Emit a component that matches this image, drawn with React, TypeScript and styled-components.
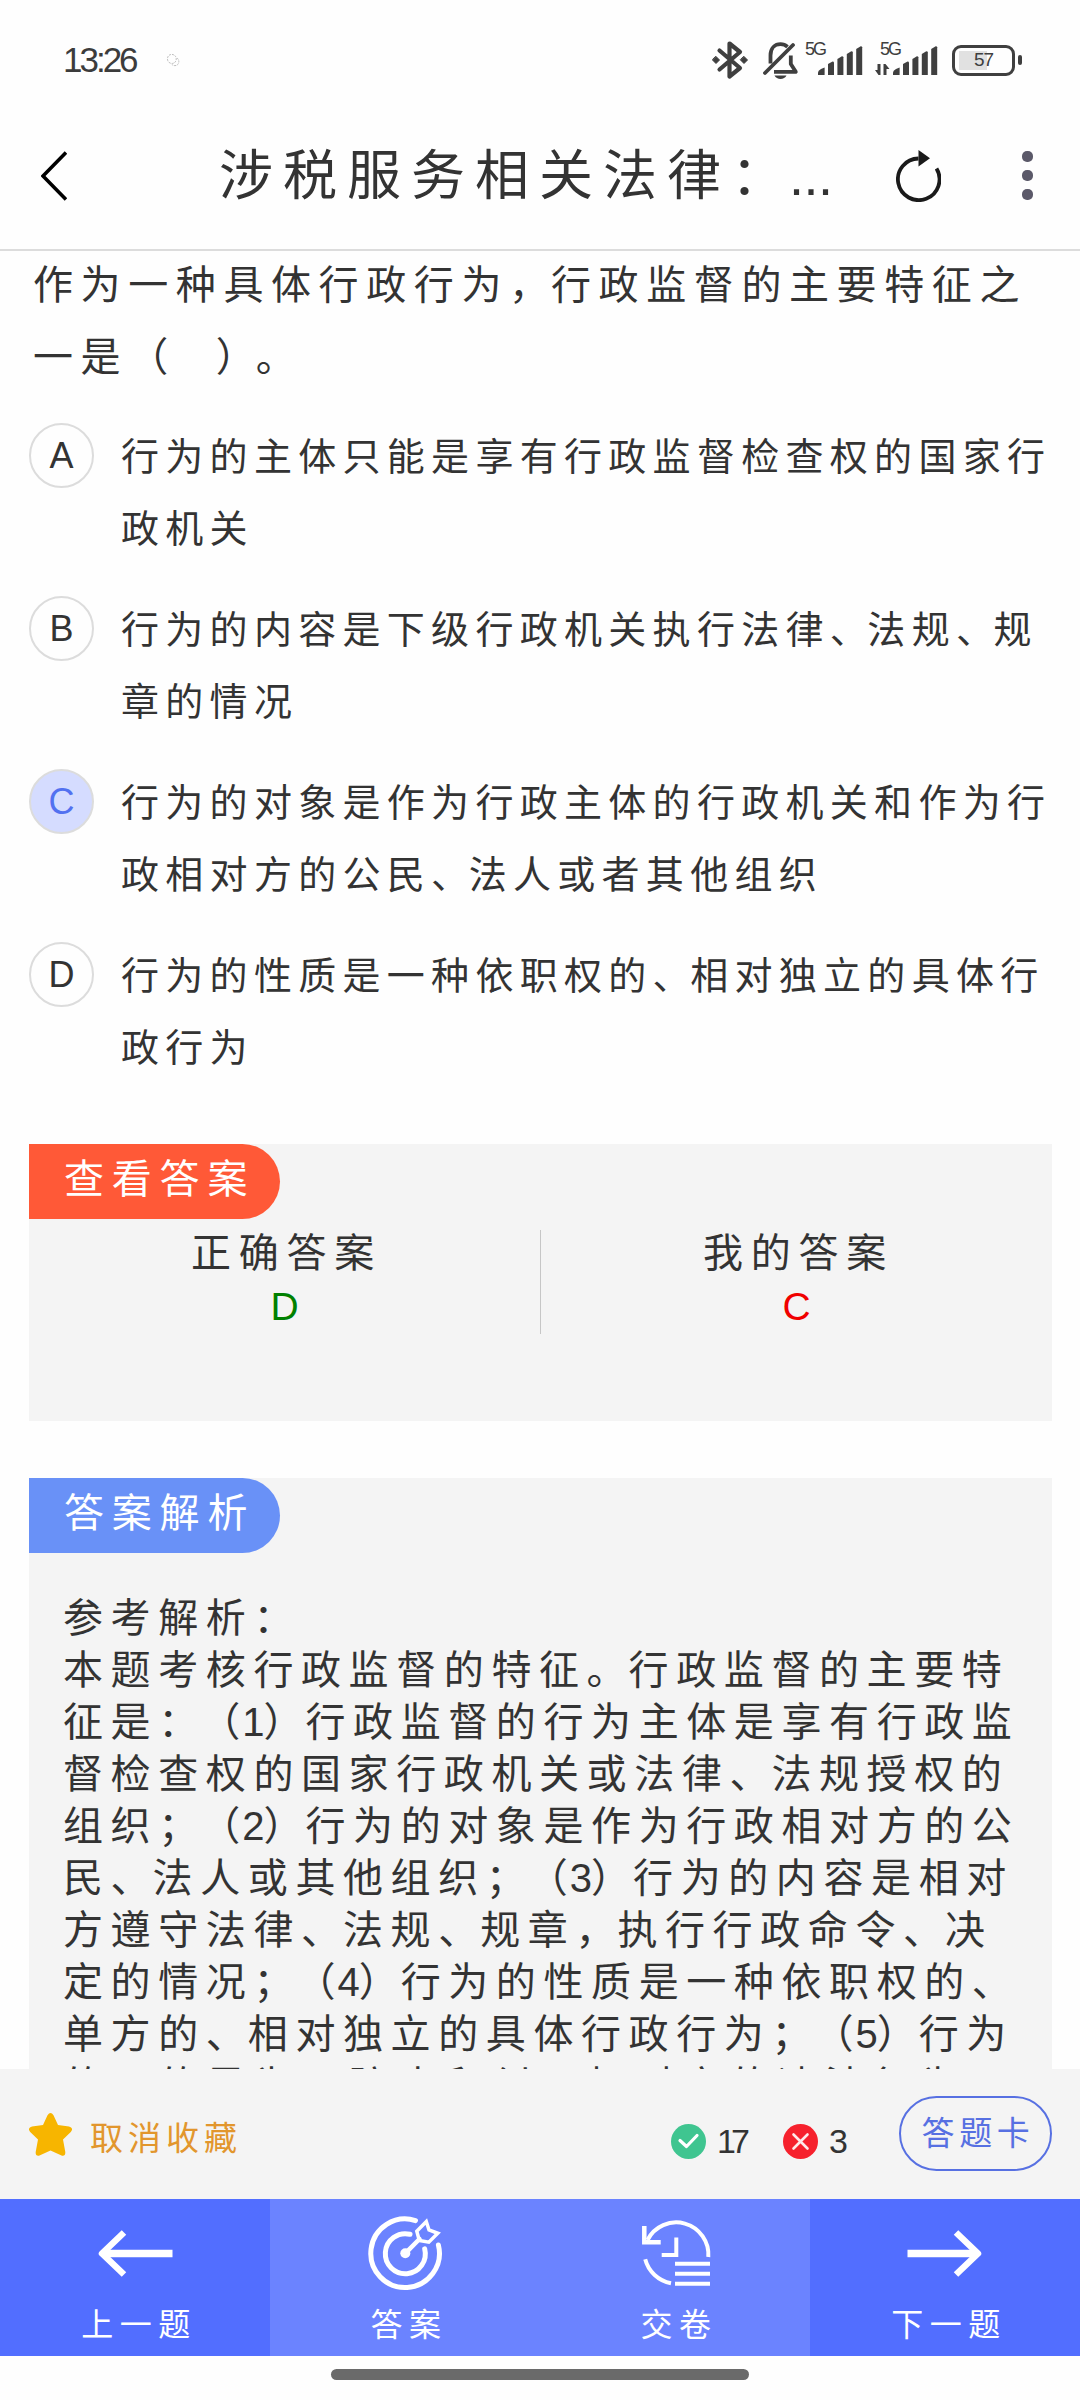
import React from 'react';
import styled, { createGlobalStyle } from 'styled-components';

const GlobalStyle = createGlobalStyle`
  * { box-sizing: border-box; }
  html, body { margin: 0; padding: 0; background: #fefefe; }
  body {
    font-family: "Liberation Sans", "Noto Sans CJK SC", sans-serif;
    color: #333;
    text-spacing-trim: space-all;
    font-kerning: none;
  }
`;

const Screen = styled.div`
  width: 1080px;
  height: 2400px;
  display: flex;
  flex-direction: column;
  background: #fefefe;
  overflow: hidden;
`;

/* ---------- status bar ---------- */
const StatusBar = styled.div`
  height: 102px;
  padding: 18px 58px 0 63px;
  display: flex;
  align-items: center;
  flex: none;
`;

const Clock = styled.span`
  font-size: 35px;
  line-height: 44px;
  letter-spacing: -3px;
  color: #3c3c3c;
  width: 103px;
  white-space: nowrap;
`;

const StatusIcons = styled.div`
  display: flex;
  align-items: center;
  margin-left: auto;
  color: #3f3f3f;
`;

const SignalBox = styled.div<{ $left: number; $width: number }>`
  position: relative;
  width: ${(p) => p.$width}px;
  height: 40px;
  margin-left: ${(p) => p.$left}px;
  svg { display: block; }
`;

const Generation = styled.span<{ $x: number }>`
  position: absolute;
  left: ${(p) => p.$x}px;
  top: 0;
  font-size: 18px;
  line-height: 18px;
  letter-spacing: -2px;
`;

const Battery = styled.div`
  display: flex;
  align-items: center;
  margin-left: 14px;
`;

const BatteryShell = styled.div`
  width: 63px;
  height: 31px;
  border: 3px solid #3f3f3f;
  border-radius: 9px;
  padding: 3px 4px;
  display: flex;
  justify-content: center;
  align-items: center;
  background: linear-gradient(#e1e1e1, #e1e1e1) 4px center / 28px 19px no-repeat;
  font-size: 19px;
  line-height: 20px;
  letter-spacing: -1px;
`;

const BatteryNub = styled.div`
  width: 4px;
  height: 10px;
  border-radius: 2px;
  margin-left: 3px;
  background: #3f3f3f;
`;

/* ---------- header ---------- */
const Header = styled.header`
  height: 149px;
  padding: 0 47px 0 41px;
  border-bottom: 2px solid #dcdcdc;
  display: flex;
  align-items: center;
  flex: none;
  svg { display: block; flex: none; }
`;

const Title = styled.h1`
  margin: 0 0 0 152px;
  width: 677px;
  font-size: 54px;
  font-weight: 400;
  line-height: 72px;
  letter-spacing: 10px;
  white-space: nowrap;
`;

const Tight = styled.span<{ $track: number }>`
  letter-spacing: ${(p) => p.$track}px;
`;

const MenuDots = styled.div`
  display: flex;
  flex-direction: column;
  gap: 8px;
  margin-left: 81px;
`;

const MenuDot = styled.i`
  width: 11px;
  height: 11px;
  border-radius: 5px;
  background: #5b5969;
`;

/* ---------- question ---------- */
const Content = styled.main`
  flex: 1;
  min-height: 0;
  overflow: hidden;
  padding: 0 28px 0 29px;
`;

const Question = styled.div`
  margin: -2px 0 28px 4px;
  font-size: 40px;
  line-height: 72px;
  letter-spacing: 7.6px;
  white-space: nowrap;
`;

const Row = styled.div``;

const Options = styled.div`
  display: flex;
  flex-direction: column;
  gap: 29px;
`;

const Option = styled.div`
  display: flex;
  gap: 27px;
  font-size: 38px;
  line-height: 72px;
  letter-spacing: 6.3px;
  white-space: nowrap;
`;

const Letter = styled.div<{ $picked?: boolean }>`
  width: 65px;
  height: 65px;
  margin-top: 2px;
  flex: none;
  display: flex;
  align-items: center;
  justify-content: center;
  border: 2px solid #dcdcdc;
  border-radius: 50%;
  background: ${(p) => (p.$picked ? '#d5dcff' : 'transparent')};
  color: ${(p) => (p.$picked ? '#5271f0' : '#333')};
  font-size: 36px;
  line-height: 60px;
  letter-spacing: 0;
`;

/* ---------- answer panels ---------- */
const Panel = styled.section<{ $top: number; $height: number }>`
  margin-top: ${(p) => p.$top}px;
  height: ${(p) => p.$height}px;
  background: #f4f4f4;
`;

const Tag = styled.div<{ $color: string }>`
  width: 251px;
  height: 75px;
  padding-left: 35px;
  border-radius: 0 38px 38px 0;
  background: ${(p) => p.$color};
  color: #fff;
  font-size: 40px;
  line-height: 70px;
  letter-spacing: 7.8px;
  white-space: nowrap;
`;

const Compare = styled.div`
  display: flex;
  height: 104px;
  margin-top: 11px;
`;

const Side = styled.div`
  flex: 1;
  display: flex;
  flex-direction: column;
  align-items: center;
  padding-left: 4px;
  font-size: 40px;
  line-height: 47px;
  letter-spacing: 7.8px;
  & + & { border-left: 1px solid #c6c6c6; }
`;

const Choice = styled.span<{ $color: string }>`
  color: ${(p) => p.$color};
  font-size: 39px;
  line-height: 60px;
  letter-spacing: 0;
  margin-right: 4px;
`;

const Analysis = styled.div`
  margin: 39px 0 0 34px;
  font-size: 40px;
  line-height: 52px;
  letter-spacing: 7.6px;
  white-space: nowrap;
`;

/* ---------- footer ---------- */
const Footer = styled.div`
  height: 130px;
  flex: none;
  display: flex;
  padding: 0 28px 0 29px;
  background: #f4f4f4;
  white-space: nowrap;
  svg { display: block; flex: none; }
`;

const Favourite = styled.div`
  display: flex;
  height: 130px;
  padding-top: 44px;
  gap: 18px;
  width: 642px;
  color: #e2962d;
  font-size: 33px;
  line-height: 52px;
  letter-spacing: 5px;
`;

const Tally = styled.div<{ $width: number }>`
  display: flex;
  width: ${(p) => p.$width}px;
  padding-top: 55px;
  gap: 11px;
  font-size: 34px;
  line-height: 34px;
  letter-spacing: -5px;
`;

const CardButton = styled.button`
  margin: 27px 0 0;
  padding: 0 0 0 5px;
  width: 153px;
  height: 75px;
  flex: none;
  border: 2px solid #5770e2;
  border-radius: 38px;
  background: none;
  color: #5770e2;
  font: 400 33px/68px "Liberation Sans", "Noto Sans CJK SC", sans-serif;
  letter-spacing: 4.7px;
`;

const Nav = styled.nav`
  height: 157px;
  flex: none;
  display: grid;
  grid-template-columns: repeat(4, 270px);
`;

const NavItem = styled.div<{ $strong?: boolean }>`
  background: ${(p) => (p.$strong ? '#526eff' : '#6b83ff')};
  color: #fff;
  display: flex;
  flex-direction: column;
  align-items: center;
  padding-top: 14px;
  font-size: 32px;
  line-height: 48px;
  letter-spacing: 6.5px;
  svg { display: block; }
`;

const NavLabel = styled.span`
  margin-top: 8px;
  padding-left: 8px;
`;

const Gesture = styled.div`
  height: 44px;
  flex: none;
  display: flex;
  justify-content: center;
  padding-top: 13px;
`;

const GestureBar = styled.div`
  width: 418px;
  height: 11px;
  border-radius: 6px;
  background: #6a6a6a;
`;

/* Punctuation and digits sit closer than ideographs. */
const fit = (text: string, punct: number, digit: number) =>
  text
    .split(/([，。、；：（）]+|\d+)/)
    .filter(Boolean)
    .map((part, i) => {
      if (/^\d/.test(part)) return <Tight key={i} $track={digit}>{part}</Tight>;
      if (/^[，。、；：（）]/.test(part)) return <Tight key={i} $track={punct}>{part}</Tight>;
      return part;
    });

const Bars = ({ x }: { x: number }) => (
  <g fill="currentColor">
    <path d={`M${x} 35v-2.5q0-2 3-3.5l3.600-1.500v7.500z`} />
    <path d={`M${x + 10} 35v-11l4.500-2.500q1.500 0 1.500 1v12.500z`} />
    <path d={`M${x + 19.4} 35v-16l4.500-2.800q1.500 0 1.500 1v17.800z`} />
    <path d={`M${x + 28.8} 35v-21l4.500-2.800q1.500 0 1.500 1v22.800z`} />
    <path d={`M${x + 38.2} 35v-26l4.500-2.800q1.500 0 1.500 1v27.800z`} />
  </g>
);

const BluetoothIcon = () => (
  <svg width="36" height="40" viewBox="0 0 36 40" fill="none" stroke="currentColor" strokeWidth="4.200" strokeLinejoin="round" strokeLinecap="round">
    <path d="M7.500 10.500 28 28 17.500 36.500V3.500L28 12 7.500 29.500" />
    <path d="M4 16.500 7.500 20 4 23.500 .5 20zM32 16.500l3.500 3.500-3.500 3.500-3.500-3.500z" fill="currentColor" strokeWidth="1" />
  </svg>
);

const MutedBellIcon = () => (
  <svg width="36" height="40" viewBox="0 0 36 40" fill="none" stroke="currentColor" strokeWidth="3.800" strokeLinecap="round">
    <path d="M2 33 30 5" />
    <path d="M7.500 23.500V15.500C7.500 8 12 4.200 17.500 4.200c3 0 5.200 1 7 2.600" strokeLinecap="butt" />
    <path d="M27.800 15.500V24l5 7.800H11" strokeLinejoin="round" strokeLinecap="butt" />
    <path d="M11.500 35.500h12c-2 4.500-10 4.500-12 0z" fill="currentColor" stroke="none" />
  </svg>
);

const TargetIcon = () => (
  <svg width="80" height="80" viewBox="0 0 80 80" fill="none" stroke="#fff" strokeWidth="5" strokeLinecap="round" strokeLinejoin="round">
    <path d="M50.500 7.600A34.300 34.300 0 1 0 73.400 32" />
    <path d="M45 21.300A20 20 0 1 0 59.700 35.800" />
    <circle cx="40.300" cy="40.300" r="5" fill="#fff" stroke="none" />
    <path d="M40.300 40.300 54.500 26" strokeWidth="4.500" />
    <path d="M51.800 18.300 61.300 8.500 64 17 72.800 20.300 63.800 29.200 54.300 27.500z" strokeWidth="3.500" strokeLinejoin="miter" />
  </svg>
);

const HistoryIcon = () => (
  <svg width="80" height="80" viewBox="0 0 80 80" fill="none" stroke="#fff" strokeWidth="4">
    <path d="M12.500 27A32.200 32.200 0 0 1 73.300 44" />
    <path d="M9.300 13v16.300H25.700" strokeWidth="4.500" />
    <path d="M10.200 46.300A33 33 0 0 0 36 70.300" />
    <path d="M41.300 24.500V42H26.700" />
    <path d="M40 50.700H75M40 60.700H75M40 70.700H75" />
  </svg>
);

const ArrowIcon = ({ flip }: { flip?: boolean }) => (
  <svg width="80" height="80" viewBox="0 0 80 80" fill="none" stroke="#fff">
    <g transform={flip ? 'matrix(-1 0 0 1 80 0)' : undefined}>
      <path d="M8 40.500H77.500" strokeWidth="7.500" />
      <path d="M29 19.500 7 40.500 29 61.500" strokeWidth="6.500" strokeLinejoin="round" />
    </g>
  </svg>
);

const options = [
  { letter: 'A', lines: ['行为的主体只能是享有行政监督检查权的国家行', '政机关'] },
  { letter: 'B', lines: ['行为的内容是下级行政机关执行法律、法规、规', '章的情况'] },
  { letter: 'C', lines: ['行为的对象是作为行政主体的行政机关和作为行', '政相对方的公民、法人或者其他组织'], picked: true },
  { letter: 'D', lines: ['行为的性质是一种依职权的、相对独立的具体行', '政行为'] },
];

const analysis = [
  '参考解析：',
  '本题考核行政监督的特征。行政监督的主要特',
  '征是：（1）行政监督的行为主体是享有行政监',
  '督检查权的国家行政机关或法律、法规授权的',
  '组织；（2）行为的对象是作为行政相对方的公',
  '民、法人或其他组织；（3）行为的内容是相对',
  '方遵守法律、法规、规章，执行行政命令、决',
  '定的情况；（4）行为的性质是一种依职权的、',
  '单方的、相对独立的具体行政行为；（5）行为',
  '的目的是为了防止和纠正相对方的违法行为。',
];

export default function App() {
  return (
    <Screen>
      <GlobalStyle />
      <StatusBar>
        <Clock>13:26</Clock>
        <svg width="14" height="14" viewBox="0 0 14 14" fill="none" stroke="#bdbdbd" strokeWidth="1" strokeDasharray="2 1">
          <path d="M4 10C0 8 1 2 5 1.500s6 3 5 6-4 3.500-6 2.500zM11 5c3 2 2 7-1 7.500s-4-1-4-1" />
        </svg>
        <StatusIcons>
          <BluetoothIcon />
          <SignalBox $left={15} $width={36}><MutedBellIcon /></SignalBox>
          <SignalBox $left={6} $width={58}>
            <Generation $x={0}>5G</Generation>
            <svg width="58" height="40"><Bars x={13} /></svg>
          </SignalBox>
          <SignalBox $left={12} $width={63}>
            <Generation $x={5}>5G</Generation>
            <svg width="63" height="40">
              <path d="M5.500 24v11h-2l-3.500-5h2.500V24zM8.500 35V24h2l4 5h-3v6z" fill="currentColor" />
              <Bars x={18} />
            </svg>
          </SignalBox>
          <Battery>
            <BatteryShell>57</BatteryShell>
            <BatteryNub />
          </Battery>
        </StatusIcons>
      </StatusBar>

      <Header>
        <svg width="26" height="50" viewBox="0 0 26 50" fill="none" stroke="#000" strokeWidth="3.600">
          <path d="M25 1.500 2 25 25 48.500" />
        </svg>
        <Title>
          涉税服务相关法律<Tight $track={4}>：</Tight><Tight $track={-0.5}>...</Tight>
        </Title>
        <svg width="45" height="52" viewBox="0 0 45 52" fill="none">
          <path d="M40.500 18.500A20.800 20.800 0 1 1 22.500 8.500" stroke="#1a1a1a" strokeWidth="3.800" />
          <path d="M22.500 0 34 8.300 22.500 16.500z" fill="#1a1a1a" />
        </svg>
        <MenuDots><MenuDot /><MenuDot /><MenuDot /></MenuDots>
      </Header>

      <Content>
        <Question>
          <Row>{fit('作为一种具体行政行为，行政监督的主要特征之', 2, 0)}</Row>
          <Row>{fit('一是（\u3000）。', 0, 0)}</Row>
        </Question>
        <Options>
          {options.map((o) => (
            <Option key={o.letter}>
              <Letter $picked={o.picked}>{o.letter}</Letter>
              <div>
                {o.lines.map((line) => <Row key={line}>{fit(line, -0.5, 0)}</Row>)}
              </div>
            </Option>
          ))}
        </Options>

        <Panel $top={60} $height={277}>
          <Tag $color="#ff5937">查看答案</Tag>
          <Compare>
            <Side>正确答案<Choice $color="#008000">D</Choice></Side>
            <Side>我的答案<Choice $color="#f00000">C</Choice></Side>
          </Compare>
        </Panel>

        <Panel $top={57} $height={700}>
          <Tag $color="#6991f7">答案解析</Tag>
          <Analysis>
            {analysis.map((line) => <Row key={line}>{fit(line, 2, -1)}</Row>)}
          </Analysis>
        </Panel>
      </Content>

      <Footer>
        <Favourite>
          <svg width="43" height="43" viewBox="0 0 43 43">
            <path d="M18.500 2.200Q21.500-2 24.500 2.200L29 12 40 13.500Q45 15 41.800 19L34 26.500 36.300 39Q36.500 43.500 32.500 42.500L21.500 37.500 10.500 42.500Q6.300 43.500 6.700 39L9 26.500 1.200 19Q-2 15 3 13.500L14 12z" fill="#f7b500" />
          </svg>
          取消收藏
        </Favourite>
        <Tally $width={112}>
          <svg width="35" height="35" viewBox="0 0 35 35" fill="none">
            <circle cx="17.500" cy="17.500" r="17.500" fill="#3fc590" />
            <path d="M9 16.500 15.500 22.500 26 11.500" stroke="#fff" strokeWidth="3.200" strokeLinecap="round" strokeLinejoin="round" />
          </svg>
          17
        </Tally>
        <Tally $width={116}>
          <svg width="35" height="35" viewBox="0 0 35 35" fill="none">
            <circle cx="17.500" cy="17.500" r="17.500" fill="#f6212d" />
            <path d="M10.500 10.500 24.500 24.500M24.500 10.500 10.500 24.500" stroke="#fff" strokeOpacity=".9" strokeWidth="2.600" strokeLinecap="round" />
          </svg>
          3
        </Tally>
        <CardButton>答题卡</CardButton>
      </Footer>

      <Nav>
        <NavItem $strong><ArrowIcon /><NavLabel>上一题</NavLabel></NavItem>
        <NavItem><TargetIcon /><NavLabel>答案</NavLabel></NavItem>
        <NavItem><HistoryIcon /><NavLabel>交卷</NavLabel></NavItem>
        <NavItem $strong><ArrowIcon flip /><NavLabel>下一题</NavLabel></NavItem>
      </Nav>

      <Gesture><GestureBar /></Gesture>
    </Screen>
  );
}
